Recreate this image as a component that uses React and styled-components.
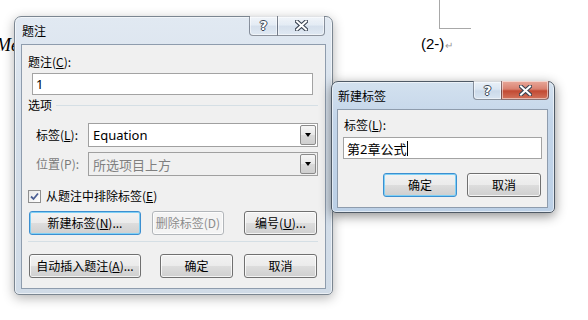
import React from 'react';
import styled, { createGlobalStyle } from 'styled-components';

const GlobalStyle = createGlobalStyle`
  html, body {
    margin: 0;
    padding: 0;
    background: #fff;
  }
  body {
    font-family: "Noto Sans CJK SC", "Noto Sans", sans-serif;
    font-size: 12px;
    color: #000;
  }
`;

const UI_FONT = `"Noto Sans", "Noto Sans CJK SC", sans-serif`;

const Desktop = styled.div`
  position: relative;
  width: 588px;
  height: 320px;
  overflow: hidden;
  background: #fff;
`;

// word document behind the dialogs
const DocText = styled.div`
  position: absolute;
  left: ${p => p.$x}px;
  top: ${p => p.$y}px;
  font-family: ${p => p.$serif ? '"Liberation Serif", serif' : '"Liberation Sans", sans-serif'};
  font-style: ${p => p.$serif ? 'italic' : 'normal'};
  font-size: ${p => p.$size}px;
  line-height: 1;
  color: #000;
  white-space: nowrap;
`;

const Pilcrow = styled.span`
  color: #9a9a9a;
  font-size: 10px;
  margin-left: 1px;
`;

const CornerMark = styled.div`
  position: absolute;
  left: 439px;
  top: 0;
  width: 31px;
  height: 28px;
  border-left: 1px solid #a8a8a8;
  border-bottom: 1px solid #a8a8a8;
`;

const Frame = styled.div`
  position: absolute;
  left: ${p => p.$x}px;
  top: ${p => p.$y}px;
  width: ${p => p.$w}px;
  height: ${p => p.$h}px;
  box-sizing: border-box;
  display: flex;
  flex-direction: column;
  padding: 0 6px ${p => p.$pb}px ${p => p.$pl}px;
  border: 1px solid ${p => p.$active ? '#4f5a66' : '#7b8691'};
  border-radius: 7px 7px 5px 5px;
  background: ${p => p.$active
    ? 'linear-gradient(180deg, #d3e1ef 0%, #c3d5e9 30%, #bcd0e6 100%)'
    : 'linear-gradient(180deg, #e1e9f2 0%, #d5dfea 40%, #d0dbe7 100%)'};
  box-shadow: 0 3px 12px rgba(0, 0, 0, ${p => p.$active ? 0.45 : 0.3}),
    inset 0 0 0 1px rgba(255, 255, 255, 0.55);
`;

const TitleBar = styled.div`
  height: 27px;
  display: flex;
  align-items: center;
  padding-left: 1px;
  font-size: 12px;
  line-height: 16px;
  color: #000;
`;

const CaptionButtons = styled.div`
  position: absolute;
  top: -1px;
  right: ${p => p.$right}px;
  display: flex;
  height: ${p => p.$h}px;
`;

const CaptionButton = styled.div`
  width: ${p => p.$w}px;
  box-sizing: border-box;
  display: flex;
  align-items: center;
  justify-content: center;
  border: 1px solid rgba(60, 70, 85, 0.55);
  border-top: none;
  margin-left: -1px;
  border-radius: ${p => p.$first ? '0 0 0 4px' : p.$last ? '0 0 4px 0' : '0'};
  background: ${p => p.$red
    ? 'linear-gradient(180deg, #e9a99b 0%, #d98170 45%, #c24a33 55%, #d2735c 100%)'
    : 'linear-gradient(180deg, rgba(255,255,255,0.55) 0%, rgba(235,242,250,0.4) 45%, rgba(200,214,230,0.45) 55%, rgba(225,234,244,0.6) 100%)'};
  box-shadow: inset 0 0 0 1px rgba(255, 255, 255, 0.5);
  font-family: "DejaVu Sans", sans-serif;
  font-weight: bold;
  font-size: 13px;
  color: #fff;
  text-shadow: 1px 0 0 #3a4452, -1px 0 0 #3a4452, 0 1px 0 #3a4452, 0 -1px 0 #3a4452;
`;

const Client = styled.div`
  flex: 1;
  background: #f0f0f0;
  border: 1px solid #8e9cad;
  display: flex;
  flex-direction: column;
`;

const Label = styled.div`
  height: 16px;
  line-height: 16px;
  margin: ${p => p.$m};
  width: ${p => p.$w ? `${p.$w}px` : 'auto'};
  font-size: 12px;
  color: ${p => p.$disabled ? '#7a7a7a' : '#000'};
  white-space: nowrap;
  flex-shrink: 0;
`;

const TextBox = styled.div`
  box-sizing: border-box;
  height: 22px;
  width: ${p => p.$w}px;
  margin: ${p => p.$m};
  border: 1px solid #a3a3a3;
  background: #fff;
  display: flex;
  align-items: center;
  padding-left: 3px;
  font-family: ${UI_FONT};
  font-size: 13px;
`;

const Caret = styled.span`
  display: inline-block;
  width: 1px;
  height: 15px;
  background: #000;
  margin-left: 1px;
`;

const GroupHeader = styled.div`
  display: flex;
  align-items: center;
  gap: 4px;
  margin: 2px 7px 0 6px;
  height: 16px;
  line-height: 16px;
`;

const GroupLine = styled.div`
  flex: 1;
  height: 1px;
  background: #d5dfe5;
`;

const FieldRow = styled.div`
  display: flex;
  align-items: center;
  margin: ${p => p.$m};
`;

const Combo = styled.div`
  box-sizing: border-box;
  width: 230px;
  height: 24px;
  border: 1px solid #a0a0a0;
  background: ${p => p.$disabled ? '#f0f0f0' : '#fff'};
  display: flex;
  align-items: stretch;
  padding: 1px;
`;

const ComboValue = styled.div`
  flex: 1;
  display: flex;
  align-items: center;
  padding-left: 3px;
  font-family: ${UI_FONT};
  font-size: 13px;
  color: ${p => p.$disabled ? '#808080' : '#000'};
`;

const ComboButton = styled.div`
  width: 16px;
  box-sizing: border-box;
  border: 1px solid #8a8a8a;
  border-radius: 2px;
  background: linear-gradient(180deg, #f6f6f6 0%, #e8e8e8 50%, #d9d9d9 51%, #cfcfcf 100%);
  display: flex;
  align-items: center;
  justify-content: center;

  &::after {
    content: '';
    border-left: 3.5px solid transparent;
    border-right: 3.5px solid transparent;
    border-top: 4px solid #000;
  }
`;

const CheckRow = styled.div`
  display: flex;
  align-items: center;
  gap: 5px;
  margin: 12px 0 0 6px;
  height: 16px;
`;

const CheckBox = styled.div`
  width: 13px;
  height: 13px;
  box-sizing: border-box;
  border: 1px solid #8f8f8f;
  background: linear-gradient(135deg, #e8e8e8, #ffffff);
  display: flex;
  align-items: center;
  justify-content: center;
`;

const ButtonRow = styled.div`
  display: flex;
  margin: ${p => p.$m};
`;

const Button = styled.div`
  box-sizing: border-box;
  width: ${p => p.$w}px;
  height: 24px;
  margin-left: ${p => p.$ml || 0}px;
  border-radius: 3px;
  border: 1px solid ${p => p.$disabled ? '#b2b6ba' : p.$focus ? '#3c8fd0' : '#707070'};
  background: ${p => p.$disabled
    ? '#f4f4f4'
    : 'linear-gradient(180deg, #f2f2f2 0%, #ebebeb 50%, #dddddd 51%, #cfcfcf 100%)'};
  box-shadow: inset 0 0 0 1px ${p => p.$focus ? '#7fd0f5' : 'rgba(255,255,255,0.75)'};
  display: flex;
  align-items: center;
  justify-content: center;
  font-size: 12px;
  line-height: 16px;
  color: ${p => p.$disabled ? '#8c8c8c' : '#000'};
  white-space: nowrap;
`;

const Separator = styled.div`
  height: 1px;
  background: #d5dfe5;
  margin: 6px 7px 0 6px;
`;

function Key({ children }) {
  return <u>{children}</u>;
}

function Caption({ right, h, helpW, closeW, active }) {
  return (
    <CaptionButtons $right={right} $h={h}>
      <CaptionButton $w={helpW} $first>?</CaptionButton>
      <CaptionButton $w={closeW} $last $red={active}>
        <svg width="13" height="11" viewBox="0 0 13 11">
          <path d="M2 1.5 L11 9.5 M11 1.5 L2 9.5" stroke="#3a4452" strokeWidth="4.2" strokeLinecap="square" />
          <path d="M2 1.5 L11 9.5 M11 1.5 L2 9.5" stroke="#fff" strokeWidth="2" strokeLinecap="square" />
        </svg>
      </CaptionButton>
    </CaptionButtons>
  );
}

function CaptionDialog() {
  return (
    <Frame $x={14} $y={16} $w={319} $h={279} $pl={6} $pb={5}>
      <TitleBar>题注</TitleBar>
      <Caption right={7} h={20} helpW={29} closeW={48} />
      <Client>
        <Label $m="9px 0 0 6px">题注(<Key>C</Key>):</Label>
        <TextBox $w={281} $m="3px 0 0 10px">1</TextBox>
        <GroupHeader>
          <span>选项</span>
          <GroupLine />
        </GroupHeader>
        <FieldRow $m="10px 0 0 14px">
          <Label $m="0" $w={52}>标签(<Key>L</Key>):</Label>
          <Combo>
            <ComboValue>Equation</ComboValue>
            <ComboButton />
          </Combo>
        </FieldRow>
        <FieldRow $m="5px 0 0 14px">
          <Label $m="0" $w={52} $disabled>位置(P):</Label>
          <Combo $disabled>
            <ComboValue $disabled>所选项目上方</ComboValue>
            <ComboButton />
          </Combo>
        </FieldRow>
        <CheckRow>
          <CheckBox>
            <svg width="9" height="9" viewBox="0 0 9 9">
              <path d="M1 4.5 L3.5 7 L8 1.5" fill="none" stroke="#4b5f94" strokeWidth="1.8" />
            </svg>
          </CheckBox>
          <Label $m="0">从题注中排除标签(<Key>E</Key>)</Label>
        </CheckRow>
        <ButtonRow $m="7px 0 0 7px">
          <Button $w={112} $focus>新建标签(<Key>N</Key>)...</Button>
          <Button $w={72} $ml={11} $disabled>删除标签(D)</Button>
          <Button $w={73} $ml={20}>编号(<Key>U</Key>)...</Button>
        </ButtonRow>
        <Separator />
        <ButtonRow $m="12px 0 0 7px">
          <Button $w={112}>自动插入题注(<Key>A</Key>)...</Button>
          <Button $w={73} $ml={19}>确定</Button>
          <Button $w={73} $ml={11}>取消</Button>
        </ButtonRow>
      </Client>
    </Frame>
  );
}

function NewLabelDialog() {
  return (
    <Frame $x={331} $y={81} $w={224} $h={132} $pl={5} $pb={4} $active>
      <TitleBar>新建标签</TitleBar>
      <Caption right={5} h={19} helpW={29} closeW={48} active />
      <Client>
        <Label $m="7px 0 0 6px">标签(<Key>L</Key>):</Label>
        <TextBox $w={199} $m="4px 0 0 5px">
          第2章公式<Caret />
        </TextBox>
        <ButtonRow $m="14px 0 0 45px">
          <Button $w={74} $focus>确定</Button>
          <Button $w={74} $ml={10}>取消</Button>
        </ButtonRow>
      </Client>
    </Frame>
  );
}

export default function App() {
  return (
    <Desktop>
      <GlobalStyle />
      <DocText $x={-4} $y={36} $size={18} $serif>Me</DocText>
      <CornerMark />
      <DocText $x={421} $y={36} $size={15}>
        (2-)<Pilcrow>↵</Pilcrow>
      </DocText>
      <CaptionDialog />
      <NewLabelDialog />
    </Desktop>
  );
}
